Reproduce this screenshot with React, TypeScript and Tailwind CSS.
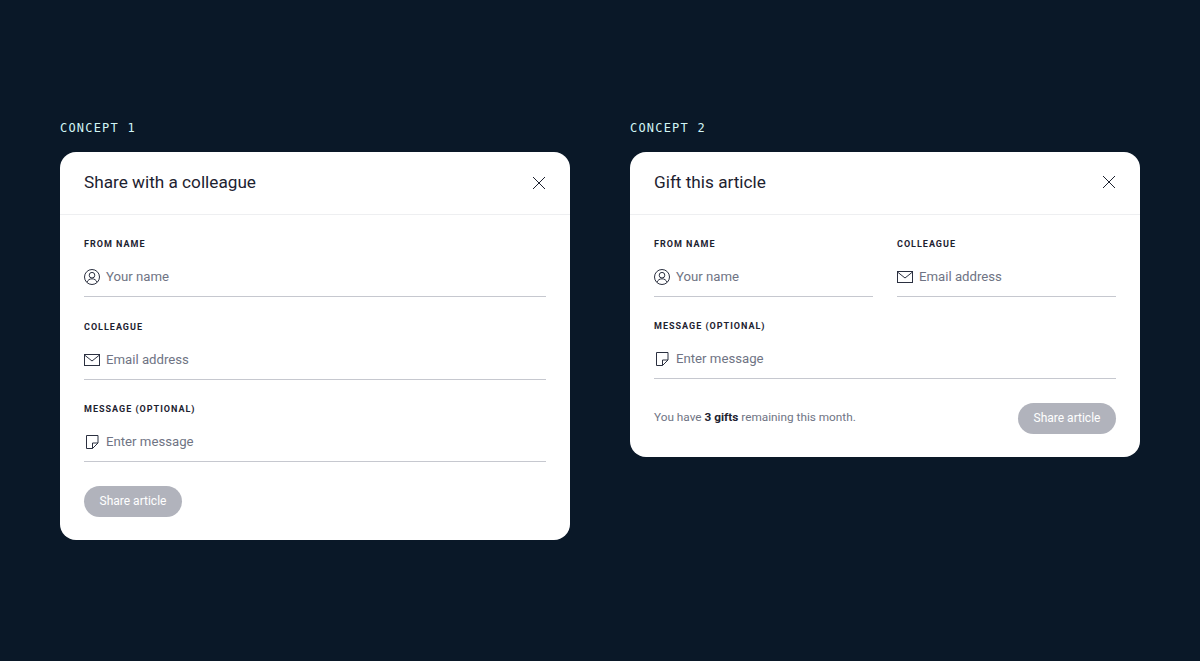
import React from 'react';

const UserIcon = () => (
  <svg width="16" height="16" viewBox="0 0 16 16" fill="none" stroke="#2b3040" strokeWidth="1" className="shrink-0">
    <circle cx="8" cy="8" r="7.5" />
    <circle cx="8" cy="6.2" r="2.8" />
    <path d="M3 13.2c.8-2.2 2.7-3.4 5-3.4s4.200 1.200 5 3.400" />
  </svg>
);

const MailIcon = () => (
  <svg width="16" height="16" viewBox="0 0 16 16" fill="none" stroke="#2b3040" strokeWidth="1" className="shrink-0">
    <rect x="0.500" y="2.500" width="15" height="11" />
    <path d="M0.500 3 8 9l7.500-6" />
  </svg>
);

const NoteIcon = () => (
  <svg width="16" height="16" viewBox="0 0 16 16" fill="none" stroke="#2b3040" strokeWidth="1" className="shrink-0">
    <path d="M2.500 1.500h11.500v7.500l-5.500 5.500h-6z" />
    <path d="M14 9H8.500v5.500" />
  </svg>
);

const CloseIcon = () => (
  <svg width="14" height="14" viewBox="0 0 14 14" fill="none" stroke="#1d2230" strokeWidth="1" className="-mt-[1px]">
    <path d="M1 1l12 12M13 1 1 13" />
  </svg>
);

function Field({ label, icon, placeholder }: { label: string; icon: React.ReactNode; placeholder: string }) {
  return (
    <div className="flex-1">
      <div className="text-[9px] leading-[12px] font-bold tracking-[1px] text-[#1d2230]">{label}</div>
      <div className="mt-[13px] flex h-[34px] items-start gap-[6px] border-b border-[#c6c8cf] pt-[6px]">
        {icon}
        <span className="text-[13.200px] leading-[16px] text-[#6f7484]">{placeholder}</span>
      </div>
    </div>
  );
}

function Header({ title }: { title: string }) {
  return (
    <div className="flex h-[63px] items-center justify-between border-b border-[#eeeff1] px-[24px]">
      <h2 className="text-[17.200px] font-normal text-[#1d2230]">{title}</h2>
      <CloseIcon />
    </div>
  );
}

function ShareButton() {
  return (
    <button className="h-[31px] w-[98px] rounded-full bg-[#b1b3bc] text-[12px] text-white">Share article</button>
  );
}

export default function App() {
  return (
    <div className="flex h-[661px] items-start gap-[60px] bg-[#0a1828] px-[60px] pt-[121px] font-['Roboto',sans-serif]">
      <section className="w-[510px]">
        <div className="font-['DejaVu_Sans_Mono',monospace] text-[12px] leading-[14px] tracking-[1.200px] text-[#d2f5f5]">CONCEPT 1</div>
        <div className="mt-[17px] rounded-[16px] bg-white">
          <Header title="Share with a colleague" />
          <div className="flex flex-col gap-[23.500px] px-[24px] pt-[23px] pb-[23px]">
            <Field label="FROM NAME" icon={<UserIcon />} placeholder="Your name" />
            <Field label="COLLEAGUE" icon={<MailIcon />} placeholder="Email address" />
            <Field label="MESSAGE (OPTIONAL)" icon={<NoteIcon />} placeholder="Enter message" />
            <div>
              <ShareButton />
            </div>
          </div>
        </div>
      </section>

      <section className="w-[510px]">
        <div className="font-['DejaVu_Sans_Mono',monospace] text-[12px] leading-[14px] tracking-[1.200px] text-[#d2f5f5]">CONCEPT 2</div>
        <div className="mt-[16.500px] rounded-[16px] bg-white">
          <Header title="Gift this article" />
          <div className="flex flex-col gap-[23.500px] px-[24px] pt-[23px] pb-[23px]">
            <div className="flex gap-[24px]">
              <Field label="FROM NAME" icon={<UserIcon />} placeholder="Your name" />
              <Field label="COLLEAGUE" icon={<MailIcon />} placeholder="Email address" />
            </div>
            <Field label="MESSAGE (OPTIONAL)" icon={<NoteIcon />} placeholder="Enter message" />
            <div className="flex items-center justify-between">
              <p className="text-[11.800px] text-[#6f7484]">
                You have <b className="font-bold text-[#1d2230]">3 gifts</b> remaining this month.
              </p>
              <ShareButton />
            </div>
          </div>
        </div>
      </section>
    </div>
  );
}
